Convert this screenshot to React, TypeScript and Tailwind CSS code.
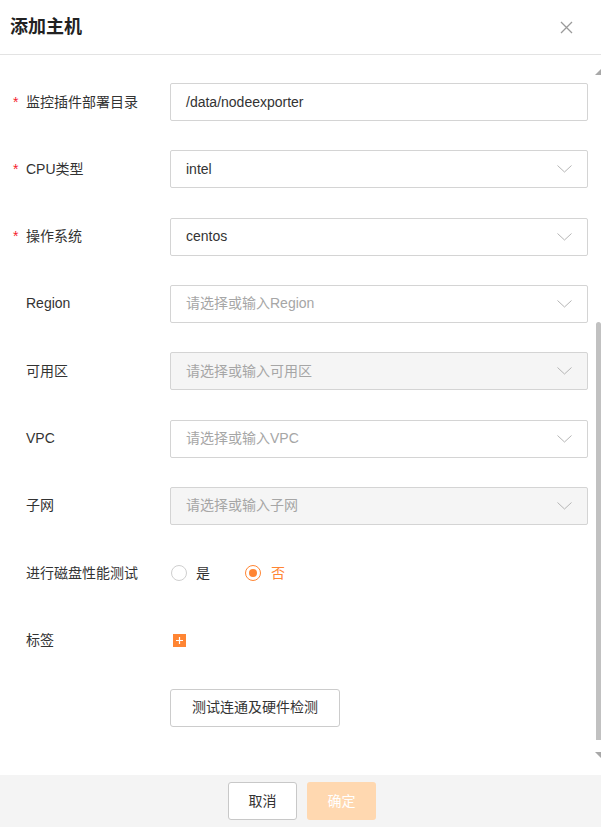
import React from "react";

const font = {
  fontFamily: '"Liberation Sans", "Noto Sans CJK SC", sans-serif',
};

type Field = {
  label: string;
  required?: boolean;
  value?: string;
  placeholder?: string;
  select?: boolean;
  disabled?: boolean;
};

const fields: Field[] = [
  { label: "监控插件部署目录", required: true, value: "/data/nodeexporter" },
  { label: "CPU类型", required: true, value: "intel", select: true },
  { label: "操作系统", required: true, value: "centos", select: true },
  { label: "Region", placeholder: "请选择或输入Region", select: true },
  { label: "可用区", placeholder: "请选择或输入可用区", select: true, disabled: true },
  { label: "VPC", placeholder: "请选择或输入VPC", select: true },
  { label: "子网", placeholder: "请选择或输入子网", select: true, disabled: true },
];

const Chevron = () => (
  <svg width="15" height="8" viewBox="0 0 15 8" className="shrink-0">
    <path d="M0.5 0.5 L7.5 7 L14.5 0.5" fill="none" stroke="#b5b5b5" strokeWidth="1" />
  </svg>
);

const Label: React.FC<{ text: string; required?: boolean }> = ({ text, required }) => (
  <div className="flex w-[170px] shrink-0 items-center pl-[13px] text-[14px] text-[#333]">
    <span className="w-[13px] text-[#f5222d]">{required ? "*" : ""}</span>
    <span>{text}</span>
  </div>
);

const Row: React.FC<{ field: Field }> = ({ field }) => (
  <div className="flex h-[38px] items-center">
    <Label text={field.label} required={field.required} />
    <div
      className={`flex h-[38px] w-[418px] items-center justify-between rounded-[2px] border border-[#d4d4d4] pl-[15px] pr-[15px] text-[14px] ${
        field.disabled ? "bg-[#f5f5f5]" : "bg-white"
      }`}
    >
      {field.value ? (
        <span className="text-[#333]">{field.value}</span>
      ) : (
        <span className="text-[#a6a6a6]">{field.placeholder}</span>
      )}
      {field.select && <Chevron />}
    </div>
  </div>
);

export default function App() {
  return (
    <div style={font} className="flex h-[827px] w-[601px] flex-col bg-white">
      <div className="flex h-[55px] shrink-0 items-center justify-between border-b border-[#e3e3e3] pl-[10px] pr-[28px]">
        <span className="text-[18px] font-bold text-[#222]">添加主机</span>
        <svg width="13" height="13" viewBox="0 0 13 13">
          <path d="M1 1 L12 12 M12 1 L1 12" stroke="#9a9a9a" strokeWidth="1.3" />
        </svg>
      </div>

      <div className="flex min-h-0 flex-1">
        <div className="flex flex-1 flex-col gap-y-[29.33px] pt-[28px]">
          {fields.map((f) => (
            <Row key={f.label} field={f} />
          ))}

          <div className="flex h-[38px] items-center">
            <Label text="进行磁盘性能测试" />
            <div className="flex items-center text-[14px]">
              <span className="ml-[1px] h-[16px] w-[16px] rounded-full border border-[#cfcfcf] bg-white" />
              <span className="ml-[9px] text-[#333]">是</span>
              <span className="ml-[35px] flex h-[16px] w-[16px] items-center justify-center rounded-full border border-[#ff8533] bg-white">
                <span className="h-[8px] w-[8px] rounded-full bg-[#ff8533]" />
              </span>
              <span className="ml-[10px] text-[#ff8533]">否</span>
            </div>
          </div>

          <div className="flex h-[38px] items-center">
            <Label text="标签" />
            <span className="ml-[3px] flex h-[13px] w-[13px] items-center justify-center bg-[#ff8533]">
              <svg width="9" height="9" viewBox="0 0 9 9">
                <path d="M4.5 1 V8 M1 4.5 H8" stroke="white" strokeWidth="1.2" />
              </svg>
            </span>
          </div>

          <div className="flex h-[38px] items-center">
            <div className="w-[170px] shrink-0" />
            <button className="h-[38px] w-[170px] rounded-[3px] border border-[#cccccc] bg-white text-[14px] text-[#333]">
              测试连通及硬件检测
            </button>
          </div>
        </div>

        <div className="flex w-[7px] shrink-0 flex-col items-end">
          <svg width="6" height="6" viewBox="0 0 6 6" className="mt-[14px]">
            <path d="M6 0 V6 H0 Z" fill="#a8a8a8" />
          </svg>
          <div className="mt-[247px] h-[418px] w-[5px] rounded-t-[3px] bg-[#c1c1c1]" />
          <svg width="6" height="6" viewBox="0 0 6 6" className="mt-[12px]">
            <path d="M0 0 H6 V6 Z" fill="#a8a8a8" />
          </svg>
        </div>
      </div>

      <div className="flex h-[52px] shrink-0 items-center justify-center gap-[10px] bg-[#f4f4f4] pl-[3px]">
        <button className="h-[38px] w-[69px] rounded-[3px] border border-[#c8c8c8] bg-white text-[14px] text-[#333]">
          取消
        </button>
        <button className="h-[38px] w-[69px] rounded-[3px] bg-[#ffd8b0] text-[14px] text-white">
          确定
        </button>
      </div>
    </div>
  );
}
